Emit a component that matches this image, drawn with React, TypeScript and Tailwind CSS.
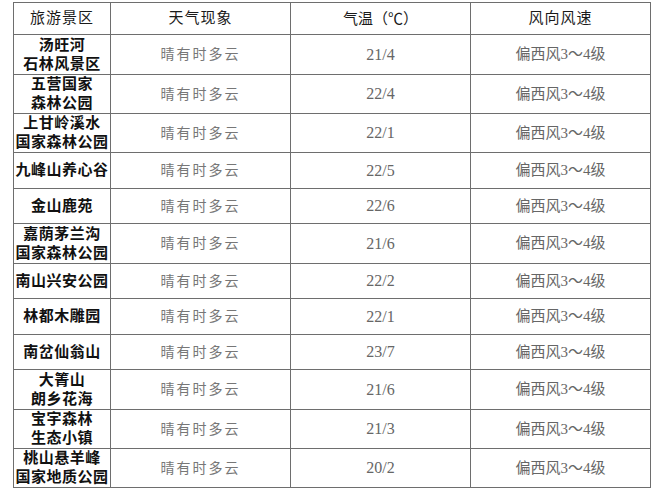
import React from "react";

type Row = { name: string[]; temp: string; h: string };

const rows: Row[] = [
  { name: ["汤旺河", "石林风景区"], temp: "21/4", h: "h-[40px]" },
  { name: ["五营国家", "森林公园"], temp: "22/4", h: "h-[39px]" },
  { name: ["上甘岭溪水", "国家森林公园"], temp: "22/1", h: "h-[39px]" },
  { name: ["九峰山养心谷"], temp: "22/5", h: "h-[36px]" },
  { name: ["金山鹿苑"], temp: "22/6", h: "h-[35px]" },
  { name: ["嘉荫茅兰沟", "国家森林公园"], temp: "21/6", h: "h-[40px]" },
  { name: ["南山兴安公园"], temp: "22/2", h: "h-[35px]" },
  { name: ["林都木雕园"], temp: "22/1", h: "h-[36px]" },
  { name: ["南岔仙翁山"], temp: "23/7", h: "h-[35px]" },
  { name: ["大箐山", "朗乡花海"], temp: "21/6", h: "h-[40px]" },
  { name: ["宝宇森林", "生态小镇"], temp: "21/3", h: "h-[38px]" },
  { name: ["桃山悬羊峰", "国家地质公园"], temp: "20/2", h: "h-[39px]" },
];

const font = "font-['Liberation_Serif','Noto_Sans_CJK_SC',serif]";

export default function App() {
  return (
    <div className={`w-[657px] h-[500px] bg-white pt-[2px] pl-[13px] ${font}`}>
      <table className="table-fixed border-collapse w-[637px]">
        <colgroup>
          <col className="w-[97px]" />
          <col className="w-[180px]" />
          <col className="w-[180px]" />
          <col className="w-[180px]" />
        </colgroup>
        <thead>
          <tr className="h-[32px] text-[15px] text-[#1a1a1a]">
            <th className="border border-[#6e6e6e] font-normal tracking-[1px] p-0">旅游景区</th>
            <th className="border border-[#6e6e6e] font-normal tracking-[1px] p-0">天气现象</th>
            <th className="border border-[#6e6e6e] font-normal p-0">
              气温（<span className="font-['Noto_Sans_CJK_SC',sans-serif]">℃</span>）
            </th>
            <th className="border border-[#6e6e6e] font-normal tracking-[1px] p-0">风向风速</th>
          </tr>
        </thead>
        <tbody>
          {rows.map((r, i) => (
            <tr key={i} className={r.h}>
              <td className="border border-[#6e6e6e] p-0 text-center text-[15px] leading-[19px] font-bold text-[#111] tracking-[0.5px]">
                {r.name.map((n, j) => (
                  <div key={j}>{n}</div>
                ))}
              </td>
              <td className="border border-[#6e6e6e] p-0 text-center text-[14px] text-[#777] tracking-[2px]">
                晴有时多云
              </td>
              <td className="border border-[#6e6e6e] p-0 text-center text-[16px] text-[#666]">
                {r.temp}
              </td>
              <td className="border border-[#6e6e6e] p-0 text-center text-[15px] text-[#666]">
                偏西风3～4级
              </td>
            </tr>
          ))}
        </tbody>
      </table>
    </div>
  );
}
